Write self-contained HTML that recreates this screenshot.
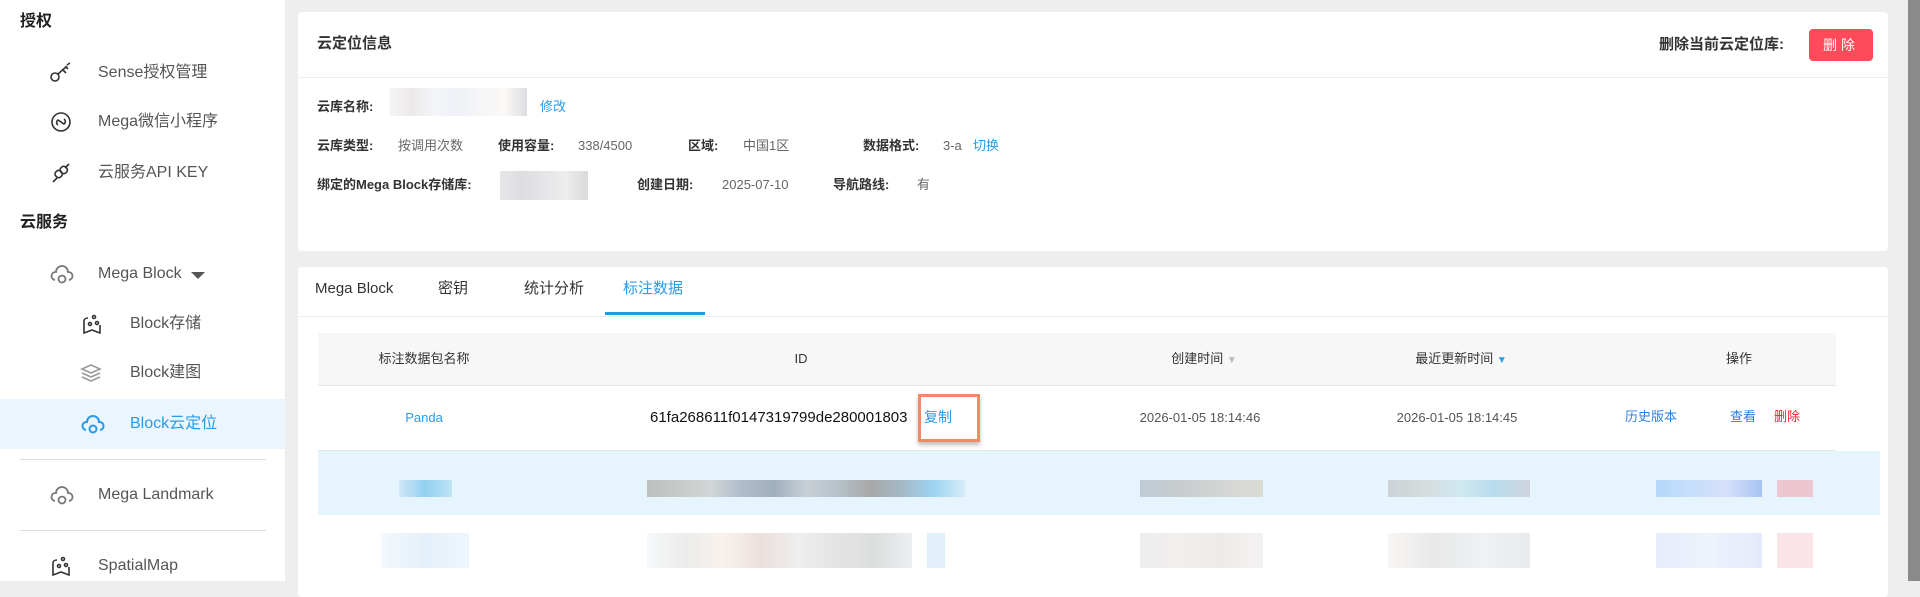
<!DOCTYPE html>
<html><head><meta charset="utf-8"><style>
*{margin:0;padding:0;box-sizing:border-box}
body{width:1920px;height:581px;overflow:hidden;background:#eeeeee;font-family:"Liberation Sans","Noto Sans CJK SC",sans-serif;position:relative}
.a{position:absolute;white-space:nowrap;line-height:20px}
.side{position:absolute;left:0;top:0;width:285px;height:581px;background:#fff}
.h{font-size:16px;font-weight:bold;color:#222}
.it{font-size:16px;color:#555}
.lb{font-size:13px;font-weight:bold;color:#333}
.v{font-size:13px;color:#666}
.bl{color:#2a9be6}
.card{position:absolute;background:#fff;border-radius:4px}
.th{font-size:13px;color:#333;transform:translateX(-50%)}
.td{font-size:13px;color:#555;transform:translateX(-50%)}
.px{position:absolute}
</style></head><body>
<div class="side">
<div class="a h" style="left:20px;top:12px">授权</div>
<svg class="a" style="left:49px;top:62px" width="24" height="22" viewBox="0 0 24 22" fill="none" stroke="#333" stroke-width="1.6"><circle cx="6" cy="15" r="4"/><path d="M9 12L18 4M14 8l3 3M17 5l2 2M18 3l3-2"/></svg>
<div class="a it" style="left:98px;top:63px">Sense授权管理</div>
<svg class="a" style="left:50px;top:111px" width="22" height="22" viewBox="0 0 22 22" fill="none" stroke="#333" stroke-width="1.6"><circle cx="11" cy="11" r="9"/><path d="M8 14a3 3 0 0 1 0-5l6 4a3 3 0 0 0 0-5"/></svg>
<div class="a it" style="left:98px;top:112px">Mega微信小程序</div>
<svg class="a" style="left:50px;top:162px" width="22" height="22" viewBox="0 0 22 22" fill="none" stroke="#333" stroke-width="1.6"><path d="M3 20l4-4M19 2l-4 4"/><rect x="5" y="9" width="7" height="7" rx="3" transform="rotate(-45 8 12)"/><rect x="10" y="5" width="7" height="7" rx="3" transform="rotate(-45 13 8)"/></svg>
<div class="a it" style="left:98px;top:163px">云服务API KEY</div>
<div class="a h" style="left:20px;top:213px">云服务</div>
<svg class="a" style="left:49px;top:265px" width="26" height="20" viewBox="0 0 24 20" fill="none" stroke="#777" stroke-width="1.8"><path d="M5 15a4 4 0 0 1 1-8 6 6 0 0 1 12 0 4 4 0 0 1 1 8"/><circle cx="12" cy="14" r="3.5"/></svg>
<div class="a it" style="left:98px;top:264px">Mega Block</div>
<div class="a" style="left:191px;top:272px;border-left:7px solid transparent;border-right:7px solid transparent;border-top:7px solid #555"></div>
<svg class="a" style="left:80px;top:313px" width="24" height="22" viewBox="0 0 24 22" fill="none" stroke="#333" stroke-width="1.6"><path d="M4 8v12l8-3 8 3v-8M8 5c-2 0-4 1-4 3"/><circle cx="14" cy="4" r="1.5"/><circle cx="10" cy="11" r="1.5"/><circle cx="17" cy="10" r="1.5"/></svg>
<div class="a it" style="left:130px;top:314px">Block存储</div>
<svg class="a" style="left:80px;top:362px" width="24" height="22" viewBox="0 0 24 22" fill="none" stroke="#999" stroke-width="1.6"><path d="M2 7l9-4 9 4-9 4zM2 11l9 4 9-4M2 15l9 4 9-4"/></svg>
<div class="a it" style="left:130px;top:363px">Block建图</div>
<div class="a" style="left:0;top:399px;width:285px;height:50px;background:#eaf5fd"></div>
<svg class="a" style="left:80px;top:415px" width="26" height="20" viewBox="0 0 24 20" fill="none" stroke="#2a9be6" stroke-width="2"><path d="M5 15a4 4 0 0 1 1-8 6 6 0 0 1 12 0 4 4 0 0 1 1 8"/><circle cx="12" cy="14" r="3.5"/></svg>
<div class="a it" style="left:130px;top:414px;color:#2a9be6">Block云定位</div>
<div class="a" style="left:20px;top:459px;width:246px;height:1px;background:#ddd"></div>
<svg class="a" style="left:49px;top:486px" width="26" height="20" viewBox="0 0 24 20" fill="none" stroke="#777" stroke-width="1.8"><path d="M5 15a4 4 0 0 1 1-8 6 6 0 0 1 12 0 4 4 0 0 1 1 8"/><circle cx="12" cy="14" r="3.5"/></svg>
<div class="a it" style="left:98px;top:485px">Mega Landmark</div>
<div class="a" style="left:20px;top:530px;width:246px;height:1px;background:#ddd"></div>
<svg class="a" style="left:49px;top:555px" width="24" height="22" viewBox="0 0 24 22" fill="none" stroke="#333" stroke-width="1.6"><path d="M4 8v12l8-3 8 3v-8M8 5c-2 0-4 1-4 3"/><circle cx="14" cy="4" r="1.5"/><circle cx="10" cy="11" r="1.5"/><circle cx="17" cy="10" r="1.5"/></svg>
<div class="a it" style="left:98px;top:556px">SpatialMap</div>
</div>
<div class="a" style="left:1908px;top:0;width:12px;height:581px;background:#8a8a8a"></div>

<div class="card" style="left:298px;top:12px;width:1590px;height:239px"></div>
<div class="a" style="left:298px;top:77px;width:1590px;height:1px;background:#eee"></div>
<div class="a" style="left:317px;top:34px;font-size:15px;font-weight:bold;color:#333">云定位信息</div>
<div class="a" style="left:1659px;top:35px;font-size:15px;font-weight:bold;color:#333">删除当前云定位库:</div>
<div class="a" style="left:1809px;top:29px;width:64px;height:32px;background:#ff4a5a;border-radius:4px;color:#fff;font-size:14px;text-align:center;line-height:32px;letter-spacing:4px">删除</div>
<div class="a lb" style="left:317px;top:97px">云库名称:</div>
<div class="px" style="left:389px;top:88px;width:138px;height:28px;background:linear-gradient(90deg,#f5f6f8,#ece8e8,#f3f5f8,#eef1f6,#f6f6f8,#fcf9f6,#dcdde1)"></div>
<div class="a v bl" style="left:540px;top:97px">修改</div>
<div class="a lb" style="left:317px;top:136px">云库类型:</div>
<div class="a v" style="left:398px;top:136px">按调用次数</div>
<div class="a lb" style="left:498px;top:136px">使用容量:</div>
<div class="a v" style="left:578px;top:136px">338/4500</div>
<div class="a lb" style="left:688px;top:136px">区域:</div>
<div class="a v" style="left:743px;top:136px">中国1区</div>
<div class="a lb" style="left:863px;top:136px">数据格式:</div>
<div class="a v" style="left:943px;top:136px">3-a</div>
<div class="a v bl" style="left:973px;top:136px">切换</div>
<div class="a lb" style="left:317px;top:175px">绑定的Mega Block存储库:</div>
<div class="px" style="left:500px;top:171px;width:88px;height:29px;background:linear-gradient(90deg,#e6e6ea,#dedcde,#e4e5e8,#eeeded,#d9dadd)"></div>
<div class="a lb" style="left:637px;top:175px">创建日期:</div>
<div class="a v" style="left:722px;top:175px">2025-07-10</div>
<div class="a lb" style="left:833px;top:175px">导航路线:</div>
<div class="a v" style="left:917px;top:175px">有</div>

<div class="card" style="left:298px;top:267px;width:1590px;height:330px"></div>
<div class="a" style="left:298px;top:316px;width:1590px;height:1px;background:#eee"></div>
<div class="a" style="left:315px;top:279px;font-size:15px;color:#333">Mega Block</div>
<div class="a" style="left:438px;top:279px;font-size:15px;color:#333">密钥</div>
<div class="a" style="left:524px;top:279px;font-size:15px;color:#333">统计分析</div>
<div class="a" style="left:623px;top:279px;font-size:15px;color:#2a9be6">标注数据</div>
<div class="a" style="left:605px;top:312px;width:100px;height:3px;background:#1e9be8"></div>
<div class="a" style="left:318px;top:333px;width:1518px;height:53px;background:#f7f7f7;border-bottom:1px solid #e6e6e6"></div>
<div class="a th" style="left:424px;top:349px">标注数据包名称</div>
<div class="a th" style="left:801px;top:349px">ID</div>
<div class="a th" style="left:1204px;top:349px">创建时间 <span style="color:#bbb;font-size:10px">▼</span></div>
<div class="a th" style="left:1461px;top:349px">最近更新时间 <span style="color:#2a9be6;font-size:10px">▼</span></div>
<div class="a th" style="left:1739px;top:349px">操作</div>
<div class="a" style="left:318px;top:450px;width:1518px;height:1px;background:#e6e6e6"></div>
<div class="a td" style="left:424px;top:408px;color:#2a9be6">Panda</div>
<div class="a" style="left:650px;top:408px;font-size:15px;color:#111">61fa268611f0147319799de280001803</div>
<div class="a" style="left:918px;top:394px;width:62px;height:48px;border:3px solid #f08a64;box-shadow:0 3px 4px rgba(0,0,0,.25)"></div>
<div class="a" style="left:924px;top:407px;font-size:14px;color:#2a9be6">复制</div>
<div class="a td" style="left:1200px;top:408px">2026-01-05 18:14:46</div>
<div class="a td" style="left:1457px;top:408px">2026-01-05 18:14:45</div>
<div class="a" style="left:1625px;top:407px;font-size:13px;color:#2a7ee6">历史版本</div>
<div class="a" style="left:1730px;top:407px;font-size:13px;color:#2a7ee6">查看</div>
<div class="a" style="left:1774px;top:407px;font-size:13px;color:#f5222d">删除</div>
<div class="a" style="left:318px;top:451px;width:1562px;height:64px;background:#e6f5fd"></div>
<div class="px" style="left:399px;top:480px;width:53px;height:17px;background:linear-gradient(90deg,#cfe6f8,#92d0f0,#bfe2f6)"></div>
<div class="px" style="left:647px;top:480px;width:318px;height:17px;background:linear-gradient(90deg,#bcc1c0,#c6cbca,#d2d6d6,#b0bccb,#a0afbd,#c8d0d6,#b8c2ca,#a8a8a8,#a4b8c4,#9dd4f2,#d6ecf8)"></div>
<div class="px" style="left:1140px;top:480px;width:123px;height:17px;background:linear-gradient(90deg,#c0ccd6,#c8cccc,#d4d6d6,#dcdcd6)"></div>
<div class="px" style="left:1388px;top:480px;width:142px;height:17px;background:linear-gradient(90deg,#ccd2d6,#d6dcdc,#d0e8f0,#b8dcee,#d0d4dc)"></div>
<div class="px" style="left:1656px;top:480px;width:106px;height:17px;background:linear-gradient(90deg,#b6d8fa,#c6defa,#d6e0fa,#a8c4f4)"></div>
<div class="px" style="left:1777px;top:480px;width:36px;height:17px;background:#ecc6d0"></div>
<div class="px" style="left:381px;top:533px;width:88px;height:35px;background:linear-gradient(90deg,#f4f8fc,#e4f0fa,#eef6fc)"></div>
<div class="px" style="left:647px;top:533px;width:265px;height:35px;background:linear-gradient(90deg,#f6f8fa,#ececec,#f8f2ec,#ebe0dc,#eeeeee,#e4e4e4,#dcdede,#eceff2)"></div>
<div class="px" style="left:927px;top:533px;width:18px;height:35px;background:#e0eff8"></div>
<div class="px" style="left:1140px;top:533px;width:123px;height:35px;background:linear-gradient(90deg,#eeeeef,#f2eeec,#eeeaea,#f4f2f2)"></div>
<div class="px" style="left:1388px;top:533px;width:142px;height:35px;background:linear-gradient(90deg,#f8f6f4,#e8e8e8,#eef2f4,#e8eaec)"></div>
<div class="px" style="left:1656px;top:533px;width:106px;height:35px;background:linear-gradient(90deg,#e8ecfa,#eef2fc,#e4eafa)"></div>
<div class="px" style="left:1777px;top:533px;width:36px;height:35px;background:#fbe4e8"></div>
</body></html>
